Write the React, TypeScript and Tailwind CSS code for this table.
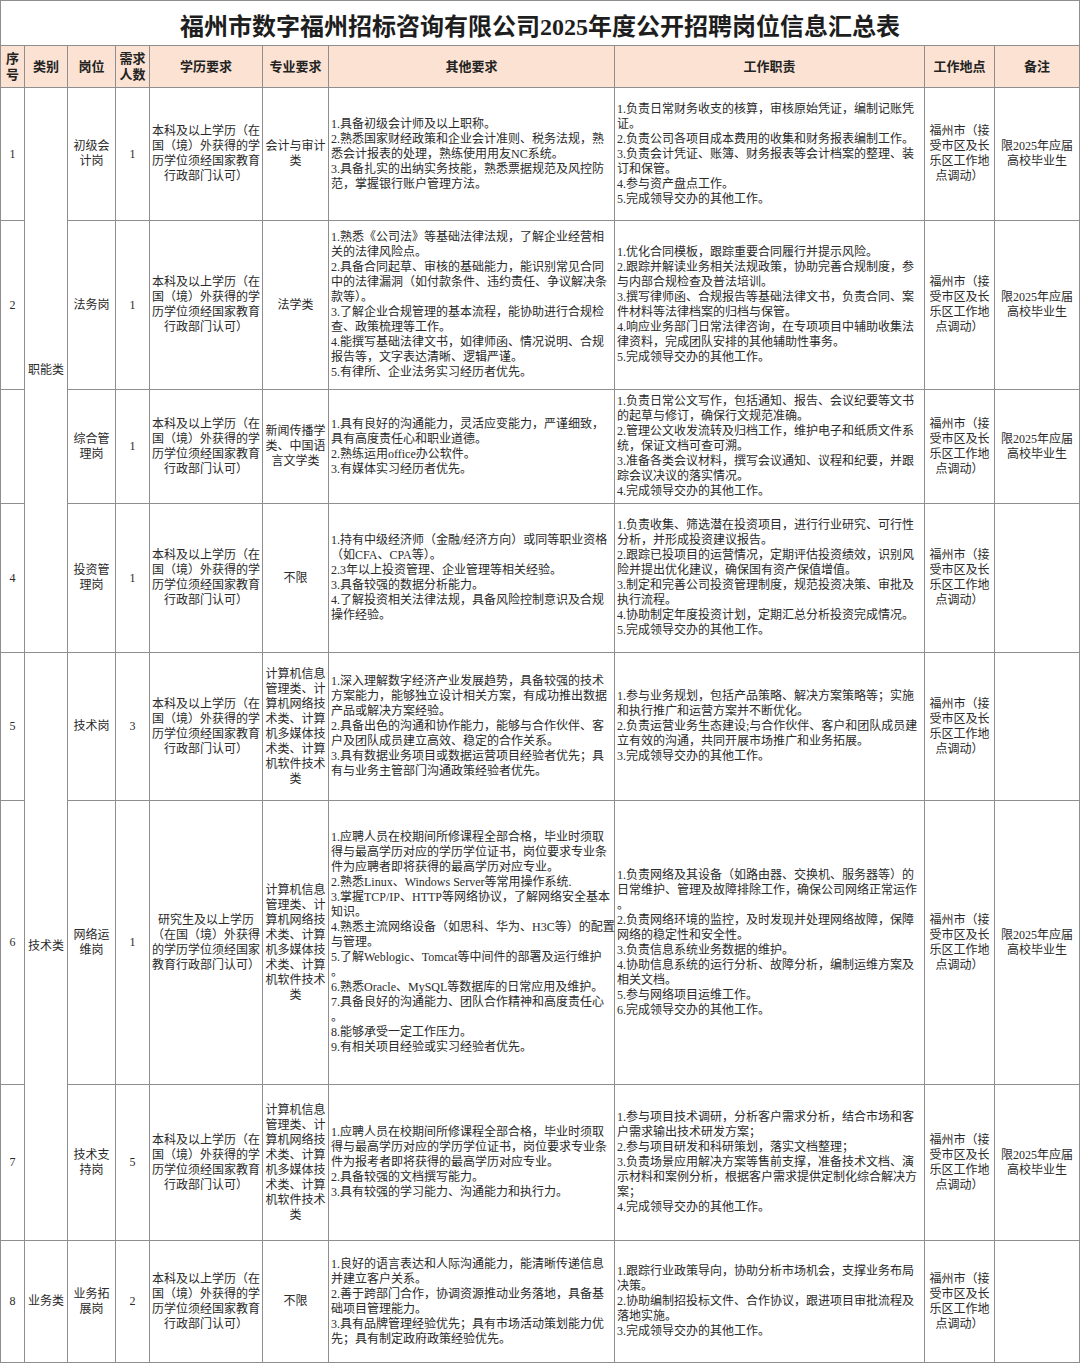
import React from 'react';
import clsx from 'clsx';

interface Row {
  seq: string
  cat?: { text: string; span: string }
  post: string[]
  num: string
  edu: string[]
  major: string[]
  other: string[]
  duties: string[]
  remark: string[]
}

const EDU = ['本科及以上学历（在', '国（境）外获得的学', '历学位须经国家教育', '行政部门认可）'];
const LOC = ['福州市（接', '受市区及长', '乐区工作地', '点调动）'];
const REM = ['限2025年应届', '高校毕业生'];
const TECH = ['计算机信息', '管理类、计', '算机网络技', '术类、计算', '机多媒体技', '术类、计算', '机软件技术', '类'];

const rows: Row[] = [
  {
    seq: '1',
    cat: { text: '职能类', span: 'row-span-4' },
    post: ['初级会', '计岗'],
    num: '1',
    edu: EDU,
    major: ['会计与审计', '类'],
    other: [
      '1.具备初级会计师及以上职称。',
      '2.熟悉国家财经政策和企业会计准则、税务法规，熟',
      '悉会计报表的处理，熟练使用用友NC系统。',
      '3.具备扎实的出纳实务技能，熟悉票据规范及风控防',
      '范，掌握银行账户管理方法。',
    ],
    duties: [
      '1.负责日常财务收支的核算，审核原始凭证，编制记账凭',
      '证。',
      '2.负责公司各项目成本费用的收集和财务报表编制工作。',
      '3.负责会计凭证、账簿、财务报表等会计档案的整理、装',
      '订和保管。',
      '4.参与资产盘点工作。',
      '5.完成领导交办的其他工作。',
    ],
    remark: REM,
  },
  {
    seq: '2',
    post: ['法务岗'],
    num: '1',
    edu: EDU,
    major: ['法学类'],
    other: [
      '1.熟悉《公司法》等基础法律法规，了解企业经营相',
      '关的法律风险点。',
      '2.具备合同起草、审核的基础能力，能识别常见合同',
      '中的法律漏洞（如付款条件、违约责任、争议解决条',
      '款等）。',
      '3.了解企业合规管理的基本流程，能协助进行合规检',
      '查、政策梳理等工作。',
      '4.能撰写基础法律文书，如律师函、情况说明、合规',
      '报告等，文字表达清晰、逻辑严谨。',
      '5.有律所、企业法务实习经历者优先。',
    ],
    duties: [
      '1.优化合同模板，跟踪重要合同履行并提示风险。',
      '2.跟踪并解读业务相关法规政策，协助完善合规制度，参',
      '与内部合规检查及普法培训。',
      '3.撰写律师函、合规报告等基础法律文书，负责合同、案',
      '件材料等法律档案的归档与保管。',
      '4.响应业务部门日常法律咨询，在专项项目中辅助收集法',
      '律资料，完成团队安排的其他辅助性事务。',
      '5.完成领导交办的其他工作。',
    ],
    remark: REM,
  },
  {
    seq: '',
    post: ['综合管', '理岗'],
    num: '1',
    edu: EDU,
    major: ['新闻传播学', '类、中国语', '言文学类'],
    other: [
      '1.具有良好的沟通能力，灵活应变能力，严谨细致，',
      '具有高度责任心和职业道德。',
      '2.熟练运用office办公软件。',
      '3.有媒体实习经历者优先。',
    ],
    duties: [
      '1.负责日常公文写作，包括通知、报告、会议纪要等文书',
      '的起草与修订，确保行文规范准确。',
      '2.管理公文收发流转及归档工作，维护电子和纸质文件系',
      '统，保证文档可查可溯。',
      '3.准备各类会议材料，撰写会议通知、议程和纪要，并跟',
      '踪会议决议的落实情况。',
      '4.完成领导交办的其他工作。',
    ],
    remark: REM,
  },
  {
    seq: '4',
    post: ['投资管', '理岗'],
    num: '1',
    edu: EDU,
    major: ['不限'],
    other: [
      '1.持有中级经济师（金融/经济方向）或同等职业资格',
      '（如CFA、CPA等）。',
      '2.3年以上投资管理、企业管理等相关经验。',
      '3.具备较强的数据分析能力。',
      '4.了解投资相关法律法规，具备风险控制意识及合规',
      '操作经验。',
    ],
    duties: [
      '1.负责收集、筛选潜在投资项目，进行行业研究、可行性',
      '分析，并形成投资建议报告。',
      '2.跟踪已投项目的运营情况，定期评估投资绩效，识别风',
      '险并提出优化建议，确保国有资产保值增值。',
      '3.制定和完善公司投资管理制度，规范投资决策、审批及',
      '执行流程。',
      '4.协助制定年度投资计划，定期汇总分析投资完成情况。',
      '5.完成领导交办的其他工作。',
    ],
    remark: [],
  },
  {
    seq: '5',
    cat: { text: '技术类', span: 'row-span-3' },
    post: ['技术岗'],
    num: '3',
    edu: EDU,
    major: TECH,
    other: [
      '1.深入理解数字经济产业发展趋势，具备较强的技术',
      '方案能力，能够独立设计相关方案，有成功推出数据',
      '产品或解决方案经验。',
      '2.具备出色的沟通和协作能力，能够与合作伙伴、客',
      '户及团队成员建立高效、稳定的合作关系。',
      '3.具有数据业务项目或数据运营项目经验者优先；具',
      '有与业务主管部门沟通政策经验者优先。',
    ],
    duties: [
      '1.参与业务规划，包括产品策略、解决方案策略等；实施',
      '和执行推广和运营方案并不断优化。',
      '2.负责运营业务生态建设;与合作伙伴、客户和团队成员建',
      '立有效的沟通，共同开展市场推广和业务拓展。',
      '3.完成领导交办的其他工作。',
    ],
    remark: [],
  },
  {
    seq: '6',
    post: ['网络运', '维岗'],
    num: '1',
    edu: ['研究生及以上学历', '（在国（境）外获得', '的学历学位须经国家', '教育行政部门认可）'],
    major: TECH,
    other: [
      '1.应聘人员在校期间所修课程全部合格，毕业时须取',
      '得与最高学历对应的学历学位证书，岗位要求专业条',
      '件为应聘者即将获得的最高学历对应专业。',
      '2.熟悉Linux、Windows Server等常用操作系统.',
      '3.掌握TCP/IP、HTTP等网络协议，了解网络安全基本',
      '知识。',
      '4.熟悉主流网络设备（如思科、华为、H3C等）的配置',
      '与管理。',
      '5.了解Weblogic、Tomcat等中间件的部署及运行维护',
      '。',
      '6.熟悉Oracle、MySQL等数据库的日常应用及维护。',
      '7.具备良好的沟通能力、团队合作精神和高度责任心',
      '。',
      '8.能够承受一定工作压力。',
      '9.有相关项目经验或实习经验者优先。',
    ],
    duties: [
      '1.负责网络及其设备（如路由器、交换机、服务器等）的',
      '日常维护、管理及故障排除工作，确保公司网络正常运作',
      '。',
      '2.负责网络环境的监控，及时发现并处理网络故障，保障',
      '网络的稳定性和安全性。',
      '3.负责信息系统业务数据的维护。',
      '4.协助信息系统的运行分析、故障分析，编制运维方案及',
      '相关文档。',
      '5.参与网络项目运维工作。',
      '6.完成领导交办的其他工作。',
    ],
    remark: REM,
  },
  {
    seq: '7',
    post: ['技术支', '持岗'],
    num: '5',
    edu: EDU,
    major: TECH,
    other: [
      '1.应聘人员在校期间所修课程全部合格，毕业时须取',
      '得与最高学历对应的学历学位证书，岗位要求专业条',
      '件为报考者即将获得的最高学历对应专业。',
      '2.具备较强的文档撰写能力。',
      '3.具有较强的学习能力、沟通能力和执行力。',
    ],
    duties: [
      '1.参与项目技术调研，分析客户需求分析，结合市场和客',
      '户需求输出技术研发方案；',
      '2.参与项目研发和科研策划，落实文档整理；',
      '3.负责场景应用解决方案等售前支撑，准备技术文档、演',
      '示材料和案例分析，根据客户需求提供定制化综合解决方',
      '案；',
      '4.完成领导交办的其他工作。',
    ],
    remark: REM,
  },
  {
    seq: '8',
    cat: { text: '业务类', span: 'row-span-1' },
    post: ['业务拓', '展岗'],
    num: '2',
    edu: EDU,
    major: ['不限'],
    other: [
      '1.良好的语言表达和人际沟通能力，能清晰传递信息',
      '并建立客户关系。',
      '2.善于跨部门合作，协调资源推动业务落地，具备基',
      '础项目管理能力。',
      '3.具有品牌管理经验优先；具有市场活动策划能力优',
      '先；具有制定政府政策经验优先。',
    ],
    duties: [
      '1.跟踪行业政策导向，协助分析市场机会，支撑业务布局',
      '决策。',
      '2.协助编制招投标文件、合作协议，跟进项目审批流程及',
      '落地实施。',
      '3.完成领导交办的其他工作。',
    ],
    remark: [],
  },
];

const Cell: React.FC<{ lines: string[]; left?: boolean; first?: boolean; className?: string }> = ({ lines, left, first, className }) => (
  <div
    className={clsx(
      'flex flex-col justify-center border-r border-b border-[#8e8e8e] text-[12px] leading-[15px] text-[#2a2a2a]',
      left ? 'items-start pl-[2px]' : 'items-center text-center',
      first && 'border-l',
      className,
    )}
  >
    {lines.map((l, i) => (
      <div key={i} className="whitespace-nowrap">{l}</div>
    ))}
  </div>
);

const HeadCell: React.FC<{ lines: string[]; first?: boolean }> = ({ lines, first }) => (
  <div
    className={clsx(
      'flex flex-col items-center justify-center border-r border-b border-[#8e8e8e] bg-[#fbe2d3] text-center text-[13px] font-bold leading-[16px] text-[#222]',
      first && 'border-l',
    )}
  >
    {lines.map((l, i) => (
      <div key={i} className="whitespace-nowrap">{l}</div>
    ))}
  </div>
);

export default function App() {
  return (
    <div className="w-[1080px] bg-white font-['Liberation_Serif','Noto_Sans_CJK_SC',serif]">
      <div className="flex h-[46px] items-center justify-center border border-[#8e8e8e] pt-[7px]">
        <h1 className="text-[24px] font-bold leading-[30px] text-[#1e1e1e]">
          福州市数字福州招标咨询有限公司2025年度公开招聘岗位信息汇总表
        </h1>
      </div>
      <div className="grid grid-cols-[25px_43px_48px_34px_113px_66px_286px_310px_70px_85px] grid-rows-[42px_133px_169px_114px_149px_148px_284px_156px_122px]">
        <HeadCell lines={['序', '号']} first />
        <HeadCell lines={['类别']} />
        <HeadCell lines={['岗位']} />
        <HeadCell lines={['需求', '人数']} />
        <HeadCell lines={['学历要求']} />
        <HeadCell lines={['专业要求']} />
        <HeadCell lines={['其他要求']} />
        <HeadCell lines={['工作职责']} />
        <HeadCell lines={['工作地点']} />
        <HeadCell lines={['备注']} />
        {rows.map((r, i) => (
          <React.Fragment key={i}>
            <Cell lines={[r.seq]} first />
            {r.cat && <Cell lines={[r.cat.text]} className={r.cat.span} />}
            <Cell lines={r.post} />
            <Cell lines={[r.num]} />
            <Cell lines={r.edu} />
            <Cell lines={r.major} />
            <Cell lines={r.other} left />
            <Cell lines={r.duties} left />
            <Cell lines={LOC} />
            <Cell lines={r.remark} />
          </React.Fragment>
        ))}
      </div>
    </div>
  );
}
